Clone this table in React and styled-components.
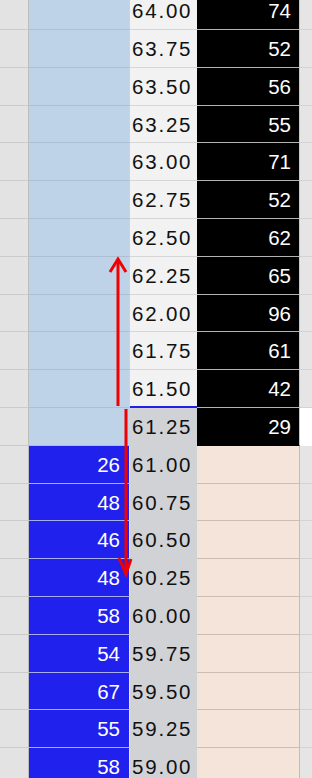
import styled, { createGlobalStyle } from "styled-components";

const GlobalStyle = createGlobalStyle`
  html, body {
    margin: 0;
    padding: 0;
    background: #ffffff;
    overflow: hidden;
  }
  body {
    font-family: "Liberation Sans", Arial, sans-serif;
  }
`;

const asks = [
  ["64.00", 74],
  ["63.75", 52],
  ["63.50", 56],
  ["63.25", 55],
  ["63.00", 71],
  ["62.75", 52],
  ["62.50", 62],
  ["62.25", 65],
  ["62.00", 96],
  ["61.75", 61],
  ["61.50", 42],
];
const bids = [
  ["61.00", 26],
  ["60.75", 48],
  ["60.50", 46],
  ["60.25", 48],
  ["60.00", 58],
  ["59.75", 54],
  ["59.50", 67],
  ["59.25", 55],
  ["59.00", 58],
];

// rows in the ladder sit on a 37.8px pitch, rounded to whole pixels
const rowCount = asks.length + 1 + bids.length;
const rowHeights = Array.from({ length: rowCount }, (_, i) => {
  const top = i === 0 ? -8 : Math.round(30 + 37.8 * (i - 1));
  const bottom = Math.round(30 + 37.8 * i);
  return `${bottom - top}px`;
}).join(" ");

const Wrapper = styled.div`
  position: relative;
  width: 312px;
  height: 778px;
  overflow: hidden;
  background: #ffffff;
`;

const Ladder = styled.div`
  display: grid;
  grid-template-columns: 29px 101px 67px 103px 1fr;
  grid-template-rows: ${(p) => p.$rows};
  margin-top: -8px;
`;

const Cell = styled.div`
  box-sizing: border-box;
  display: flex;
  align-items: center;
  padding-top: 2px;
  font-size: 20.5px;
  line-height: 1;
  border-bottom: 1px solid ${(p) => p.$line || "#c9c9c9"};
`;

const Gutter = styled(Cell)`
  background: #e3e3e3;
  border-right: 1px solid #bdbdbd;
  border-bottom-color: #cbcbcb;
`;

const BidCell = styled(Cell)`
  justify-content: flex-end;
  padding-right: 9px;
  color: #ffffff;
  background: ${(p) => (p.$active ? "#2121ee" : "#bed2e8")};
  border-right: 1px solid ${(p) => (p.$active ? "#dfe3f5" : "#c6d4e4")};
  border-bottom-color: ${(p) => (p.$active ? "#a9adf2" : "#aebed3")};
`;

const PriceCell = styled(Cell)`
  padding-left: 2px;
  letter-spacing: 1.8px;
  color: #111111;
  background: ${(p) => (p.$low ? "#d1d2d6" : "#f2f2f2")};
  border-bottom: ${(p) =>
    p.$mark
      ? "2px solid #2020e6"
      : p.$low
      ? "1px solid #d1d2d6"
      : "1px solid #d6d6d6"};
`;

const AskCell = styled(Cell)`
  justify-content: flex-end;
  padding-right: 8px;
  color: #ffffff;
  background: ${(p) => (p.$empty ? "#f5e4da" : "#000000")};
  border-right: 1px solid ${(p) => (p.$empty ? "#c8bab3" : "#c8c8c8")};
  border-bottom-color: ${(p) =>
    p.$empty ? "#cbbcb4" : p.$last ? "#000000" : "#b4b4b4"};
`;

const Edge = styled(Cell)`
  background: ${(p) => (p.$blank ? "#ffffff" : "#e5e5e5")};
  border-bottom-color: ${(p) => (p.$blank ? "#ffffff" : "#d3d3d3")};
`;

const Arrows = styled.svg`
  position: absolute;
  left: 0;
  top: 0;
  pointer-events: none;
`;

export default function App() {
  return (
    <>
      <GlobalStyle />
      <Wrapper>
        <Ladder $rows={rowHeights}>
          {asks.map(([price, qty], i) => (
            <Row
              key={price}
              price={price}
              ask={qty}
              mark={i === asks.length - 1}
            />
          ))}
          <Row price="61.25" ask={29} low lastAsk blankEdge />
          {bids.map(([price, qty]) => (
            <Row key={price} price={price} bid={qty} low />
          ))}
        </Ladder>
        <Arrows width="312" height="778" viewBox="0 0 312 778">
          <g stroke="#f00000" strokeWidth="3" fill="none">
            <line x1="118" y1="406" x2="118" y2="260" />
            <polyline points="110,272 118,259 126,272" strokeLinejoin="miter" />
            <line x1="126" y1="409" x2="126" y2="572" />
            <polyline points="119,558 126,574 131,559" strokeLinejoin="miter" />
          </g>
        </Arrows>
      </Wrapper>
    </>
  );
}

function Row({ price, ask, bid, low, mark, lastAsk, blankEdge }) {
  return (
    <>
      <Gutter />
      <BidCell $active={bid !== undefined}>{bid}</BidCell>
      <PriceCell $low={low} $mark={mark}>
        {price}
      </PriceCell>
      <AskCell $empty={ask === undefined} $last={lastAsk}>
        {ask}
      </AskCell>
      <Edge $blank={blankEdge} />
    </>
  );
}
